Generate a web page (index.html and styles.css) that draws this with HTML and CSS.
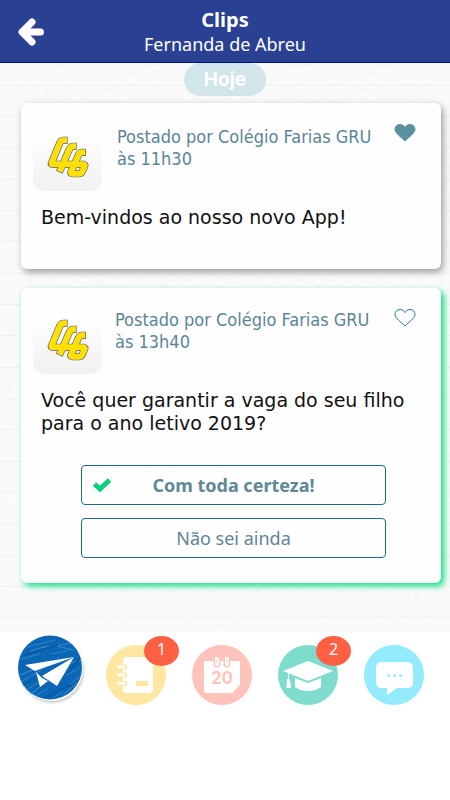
FILE: index.html
```html
<!DOCTYPE html>
<html lang="pt-BR">
<head>
<meta charset="utf-8">
<meta name="viewport" content="width=device-width, initial-scale=1">
<title>Clips</title>
<link rel="stylesheet" href="styles.css">
</head>
<body>
<svg class="defs" aria-hidden="true">
  <defs>
    <symbol id="school-logo" viewBox="0 0 207 207">
      <g fill="none" stroke-linejoin="round">
        <g stroke="#5a6280" stroke-width="22">
          <path d="M104 55H92Q84 55 80 64L56 122Q53 127 60 127H152"/>
          <path d="M131 73H121Q113 73 109 82L79 151"/>
          <path d="M159 91H148Q140 91 136 100L114 150Q112 155 119 155H138Q145 155 148 148L155 132Q157 127 150 127"/>
        </g>
        <g stroke="#ffe000" stroke-width="18">
          <path d="M102 55H92Q84 55 80 64L56 122Q53 127 60 127H152"/>
          <path d="M129 73H121Q113 73 109 82L80 149"/>
          <path d="M157 91H148Q140 91 136 100L114 150Q112 155 119 155H138Q145 155 148 148L155 132Q157 127 150 127"/>
        </g>
      </g>
    </symbol>
    <symbol id="heart" viewBox="0 0 22 20">
      <path d="M11 18C8 15 1 10 1 6.500C1 3.500 3 1.500 6 1.500C8.500 1.500 10 2.800 11 4.600C12 2.800 13.500 1.500 16 1.500C19 1.500 21 3.500 21 6.500C21 10 14 15 11 18Z"/>
    </symbol>
  </defs>
</svg>

<header class="topbar">
  <button class="back" type="button" aria-label="Voltar">
    <svg viewBox="0 0 26 28" width="26" height="28"><path d="M14 4L4 14L14 24M5 14H22.500" fill="none" stroke="#fff" stroke-width="7" stroke-linecap="round" stroke-linejoin="round"/></svg>
  </button>
  <div class="titles">
    <h1>Clips</h1>
    <p>Fernanda de Abreu</p>
  </div>
</header>

<main class="feed">
  <svg class="grain" aria-hidden="true">
    <filter id="paper"><feTurbulence type="fractalNoise" baseFrequency="0.25" numOctaves="3" seed="4"/><feColorMatrix values="0 0 0 0 0.500  0 0 0 0 0.500  0 0 0 0 0.500  0.140 0 0 0 -0.045"/></filter>
    <rect width="100%" height="100%" filter="url(#paper)"/>
  </svg>
  <p class="day">Hoje</p>

  <article class="card">
    <div class="card-head">
      <span class="avatar"><svg role="img" aria-label="Colégio Farias"><use href="#school-logo"/></svg></span>
      <p class="meta">Postado por Colégio Farias GRU<br>às 11h30</p>
      <button class="like liked" type="button" aria-label="Curtir" aria-pressed="true"><svg width="22" height="20"><use href="#heart"/></svg></button>
    </div>
    <p class="message">Bem-vindos ao nosso novo App!</p>
  </article>

  <article class="card unread">
    <div class="card-head">
      <span class="avatar"><svg role="img" aria-label="Colégio Farias"><use href="#school-logo"/></svg></span>
      <p class="meta">Postado por Colégio Farias GRU<br>às 13h40</p>
      <button class="like" type="button" aria-label="Curtir" aria-pressed="false"><svg width="22" height="20"><use href="#heart"/></svg></button>
    </div>
    <p class="message">Você quer garantir a vaga do seu filho para o ano letivo 2019?</p>
    <div class="options">
      <button class="option chosen" type="button" aria-pressed="true">
        <svg viewBox="0 0 18 14" width="18" height="14"><path d="M1.500 6L7 11L16.500 2" fill="none" stroke="#08d07a" stroke-width="5"/></svg>
        <span>Com toda certeza!</span>
      </button>
      <button class="option" type="button" aria-pressed="false"><span>Não sei ainda</span></button>
    </div>
  </article>
</main>

<nav class="tabs" aria-label="Seções">
  <a href="#clips" class="tab active" aria-label="Clips" aria-current="page">
    <svg viewBox="0 0 66 66">
      <defs><clipPath id="disc"><circle cx="33" cy="32.500" r="32"/></clipPath></defs>
      <circle cx="34" cy="34" r="32" fill="#fff"/>
      <circle cx="33" cy="32.500" r="32" fill="#0b67b5"/>
      <g clip-path="url(#disc)" fill="none" stroke-linecap="round">
        <path d="M10 12L38 5M24 13L60 7M4 24L22 19M34 19L50 16M2 48L24 35M8 56L30 42M38 62L62 42M50 40L64 32M20 60L30 54" stroke="#2f86c9" stroke-width="1"/>
        <path d="M14 16L30 11M40 11L56 15M3 40L18 34M12 61L24 51M46 60L60 48M54 28L64 25" stroke="#3d90cf" stroke-width="1"/>
        <path d="M8 20L40 10M3 52L20 42M30 62L54 50M52 36L64 22" stroke="#085ba6" stroke-width="2"/>
      </g>
      <path d="M8 30L57 22L18 36Z" fill="#fff"/>
      <path d="M19 37L23 52L31 46L25 43Z" fill="#fff"/>
      <path d="M57 22L25 41L40 51Z" fill="#fff"/>
    </svg>
  </a>
  <a href="#agenda" class="tab" aria-label="Agenda">
    <svg viewBox="0 0 60 60">
      <circle cx="30" cy="30" r="30" fill="#ffe6a2"/>
      <rect x="17" y="12" width="30" height="36" rx="4" fill="#fff"/>
      <path d="M14 22H19M14 30H19M14 38.500H19" stroke="#ffe6a2" stroke-width="5" stroke-linecap="round"/>
      <path d="M13 22H18M13 30H18M13 38.500H18" stroke="#fff" stroke-width="3" stroke-linecap="round"/>
      <rect x="30" y="36" width="12" height="5" fill="#ffe6a2"/>
    </svg>
    <span class="badge">1</span>
  </a>
  <a href="#calendario" class="tab" aria-label="Calendário">
    <svg viewBox="0 0 60 60">
      <circle cx="30" cy="30" r="30" fill="#ffc3bb"/>
      <path d="M14 16H46Q48 16 48 18V40L40 48H15Q12 48 12 45V18Q12 16 14 16Z" fill="#fff"/>
      <path d="M25 14V19M35 14V19" stroke="#ffc3bb" stroke-width="7" stroke-linecap="round"/>
      <path d="M25 14V19M35 14V19" stroke="#fff" stroke-width="4" stroke-linecap="round"/>
      <path d="M25 15V18M35 15V18" stroke="#ffc3bb" stroke-linecap="round"/>
      <text x="30" y="39" class="date">20</text>
    </svg>
  </a>
  <a href="#ensino" class="tab" aria-label="Ensino">
    <svg viewBox="0 0 60 60">
      <circle cx="30" cy="30" r="30" fill="#7ddccb"/>
      <path d="M30 16L55 26L30 36L5 26Z" fill="#fff"/>
      <path d="M17 33L30 38L43 33V42Q38 46 30 46Q22 46 17 42Z" fill="#fff"/>
      <path d="M10.500 28V36" stroke="#fff" stroke-width="1"/>
      <path d="M9 34H12L13 43H8.500Z" fill="#fff"/>
    </svg>
    <span class="badge">2</span>
  </a>
  <a href="#mensagens" class="tab" aria-label="Mensagens">
    <svg viewBox="0 0 60 60">
      <circle cx="30" cy="30" r="30" fill="#93ebfb"/>
      <path d="M18 17H43Q49 17 49 23V37Q49 43 43 43H33L23 50V43H18Q12 43 12 37V23Q12 17 18 17Z" fill="#fff"/>
      <circle cx="24.500" cy="30.500" r="1.500" fill="#93ebfb"/><circle cx="30.500" cy="30.500" r="1.500" fill="#93ebfb"/><circle cx="36.500" cy="30.500" r="1.500" fill="#93ebfb"/>
    </svg>
  </a>
</nav>
</body>
</html>
```

FILE: styles.css
```css
* { box-sizing: border-box; }
body, h1, p { margin: 0; }
body {
  background: #fff;
  font-family: "Noto Sans", "Open Sans", sans-serif;
  font-size: 18px;
}
button { font: inherit; background: none; border: 0; padding: 0; cursor: pointer; }
svg { display: block; }
.defs { position: absolute; width: 0; height: 0; }

.topbar {
  display: grid;
  grid-template-columns: 62px 1fr 62px;
  align-items: center;
  background: #294093;
  border-bottom: 1px solid #000f8b;
  color: #fff;
  padding: 8px 0 6px;
}
.back { justify-self: center; }
.titles { text-align: center; line-height: 24px; }
.titles h1 { font-size: 20px; line-height: 24px; font-weight: 700; }
.titles p { font-size: 18px; }

.feed {
  position: relative;
  padding: 0 9px 49px 21px;
  background-color: #fbfbfb;
  background-image: linear-gradient(transparent 22px, #f1f1f1 22px, #f1f1f1 23px, transparent 23px, transparent 53px, #f1f1f1 53px, #f1f1f1 54px, transparent 54px, transparent 84px, #f1f1f1 84px, #f1f1f1 85px, transparent 85px);
  background-size: 100% 94px;
}
.grain { position: absolute; inset: 0; width: 100%; height: 100%; }
.day {
  position: relative;
  width: 82px;
  margin: 0 auto 7px 163px;
  border-radius: 17px;
  background: #d1e5ea;
  color: #fff;
  font: 700 19px/33px Inter, sans-serif;
  text-align: center;
}
.card {
  position: relative;
  background: #fefefe;
  border-radius: 6px;
  padding: 19px 12px 40px;
  box-shadow: 2px 3px 7px #999;
}
.card.unread {
  margin-top: 19px;
  padding: 17px 12px 25px;
  box-shadow: 3px 3px 6px #08df80;
}
.card-head { display: flex; align-items: flex-start; }
.avatar {
  flex: none;
  width: 69px;
  height: 69px;
  border-radius: 12px;
  background: linear-gradient(#fefefe 20%, #f1f1f1);
}
.avatar svg { width: 69px; height: 69px; }
.meta {
  flex: 1;
  padding: 4px 0 0 15px;
  color: #5b8596;
  font-family: "DejaVu Sans Condensed", "Noto Sans", sans-serif;
  line-height: 22px;
  white-space: nowrap;
}
.unread .meta { padding-left: 13px; }
.like { margin: 1px 13px 0 0; }
.unread .like { margin-top: 3px; }
.like svg { fill: none; stroke: #28788e; stroke-width: 1px; }
.like.liked svg { fill: #5b909f; stroke: #5b909f; }
.message {
  margin: 15px 8px 0;
  color: #111;
  font: 19px/23px "DejaVu Sans", sans-serif;
}
.options { display: grid; gap: 13px; margin: 30px 43px 0 48px; }
.option {
  display: grid;
  grid-template-columns: 1fr auto 1fr;
  align-items: center;
  height: 40px;
  padding: 0 11px;
  border: 1px solid #1d6b84;
  border-radius: 4px;
  color: #618797;
}
.option span { grid-column: 2; }
.option.chosen { font-weight: 700; }

.tabs {
  display: grid;
  grid-template-columns: repeat(5, 1fr);
  justify-items: center;
  padding: 3px 13px 0 7px;
}
.tab { position: relative; width: 60px; height: 60px; margin-top: 10px; }
.tab.active { width: 66px; height: 66px; margin: 0; filter: drop-shadow(1px 2px 1px #ccc); }
.badge {
  position: absolute;
  top: -9px;
  left: 38px;
  width: 35px;
  height: 30px;
  border-radius: 50%;
  background: #ff6044;
  color: #fff;
  font-size: 16px;
  line-height: 26px;
  text-align: center;
}
.tab .date { font: 700 17px Inter, sans-serif; fill: #ffc3bb; text-anchor: middle; }
```
